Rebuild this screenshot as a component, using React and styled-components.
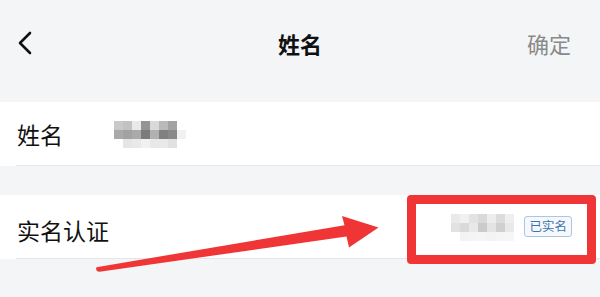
import React from "react";
import styled, { createGlobalStyle } from "styled-components";

const Global = createGlobalStyle`
  html, body { margin: 0; padding: 0; }
  body { font-family: "Noto Sans CJK SC", "Noto Sans", sans-serif; }
`;

const Screen = styled.div`
  position: relative;
  width: 600px;
  height: 297px;
  overflow: hidden;
  background: #f4f5f7;
`;

const Header = styled.div`
  height: 86px;
  display: flex;
  align-items: center;
  justify-content: space-between;
  padding: 0 29px 0 17px;
`;

const Back = styled.button`
  border: 0;
  background: none;
  padding: 0;
  width: 17px;
  height: 24px;
  display: flex;
  align-items: center;
`;

const Title = styled.div`
  position: absolute;
  left: 0;
  right: 0;
  top: 0;
  height: 86px;
  display: flex;
  align-items: center;
  justify-content: center;
  font-size: 22px;
  font-weight: 700;
  color: #111;
  pointer-events: none;
`;

const Confirm = styled.div`
  font-size: 22px;
  color: #8a8a8a;
`;

const Group = styled.div`
  margin-top: ${(p) => p.$gap}px;
  background: #fff;
  padding-left: 16px;
`;

const Row = styled.div`
  height: 63px;
  display: flex;
  align-items: center;
  border-bottom: 1px solid #e6e6e8;
  padding-right: 28px;
`;

const Label = styled.div`
  width: 97px;
  padding-left: 1px;
  font-size: 23px;
  color: #111;
  flex-shrink: 0;
  margin-top: ${(p) => p.$dy || 0}px;
`;

const Spacer = styled.div`
  flex: 1;
`;

const Mosaic = styled.div`
  display: grid;
  grid-template-columns: repeat(${(p) => p.$cols}, 9px);
  grid-auto-rows: 9px;
  margin-top: ${(p) => p.$dy || 0}px;
`;

const Cell = styled.div`
  background: ${(p) => p.$c};
`;

const Tag = styled.div`
  margin-left: 10px;
  height: 19px;
  padding: 0 4px;
  display: flex;
  align-items: center;
  border: 1px solid #aac6e2;
  border-radius: 3px;
  background: #f5f9fd;
  color: #3f72ab;
  font-size: 12.5px;
  line-height: 1;
`;

const Overlay = styled.svg`
  position: absolute;
  left: 0;
  top: 0;
  pointer-events: none;
`;

const HighlightBox = styled.div`
  position: absolute;
  left: 407px;
  top: 195px;
  width: 189px;
  height: 69px;
  box-sizing: border-box;
  border: 9px solid #ef3535;
  border-radius: 4px;
  pointer-events: none;
`;

const nameMosaic = [
  ["#c9c9c9", "#c2c2c2", "#e9e9e9", "#939393", "#d9d9d9", "#bababa", "#a3a3a3", "#fff"],
  ["#a9a9a9", "#a2a2a2", "#aaaaaa", "#7b7b7b", "#b1b1b1", "#818181", "#898989", "#f1f1f1"],
  ["#fff", "#e5e5e5", "#e9e9e9", "#f1f1f1", "#e8e8e8", "#e9e9e9", "#e1e1e1", "#fff"],
];

const realMosaic = [
  ["#eaeaea", "#f1f1f1", "#e3e3e3", "#d9d9d9", "#ededed", "#dcdcdc", "#efefef"],
  ["#e2e2e2", "#dadada", "#e9e9e9", "#cbcbcb", "#e4e4e4", "#d0d0d0", "#e9e9e9"],
  ["#fff", "#f3f3f3", "#f4f4f4", "#f5f5f5", "#f3f3f3", "#f5f5f5", "#f6f6f6"],
];

function Pixelated({ data, dy }) {
  return (
    <Mosaic $cols={data[0].length} $dy={dy}>
      {data.flat().map((c, i) => (
        <Cell key={i} $c={c} />
      ))}
    </Mosaic>
  );
}

export default function App() {
  return (
    <Screen>
      <Global />
      <Header>
        <Back aria-label="back">
          <svg width="16" height="24" viewBox="0 0 16 24">
            <path d="M13 2 L3 12 L13 22" fill="none" stroke="#111" strokeWidth="2.6" strokeLinecap="round" strokeLinejoin="round" />
          </svg>
        </Back>
        <Confirm>确定</Confirm>
      </Header>
      <Title>姓名</Title>
      <Group $gap={16}>
        <Row>
          <Label>姓名</Label>
          <Pixelated data={nameMosaic} dy={1} />
        </Row>
      </Group>
      <Group $gap={29}>
        <Row>
          <Label $dy={6}>实名认证</Label>
          <Spacer />
          <Pixelated data={realMosaic} dy={2} />
          <Tag>已实名</Tag>
        </Row>
      </Group>
      <HighlightBox />
      <Overlay width="600" height="297" viewBox="0 0 600 297">
        <path
          d="M96.5 267.2 L344.5 225.2 L342 216 L378.5 227.5 L349 247.5 L346.5 236.5 L99.5 271.8 Q95 271.5 96.5 267.2 Z"
          fill="#ef3535"
        />
      </Overlay>
    </Screen>
  );
}
